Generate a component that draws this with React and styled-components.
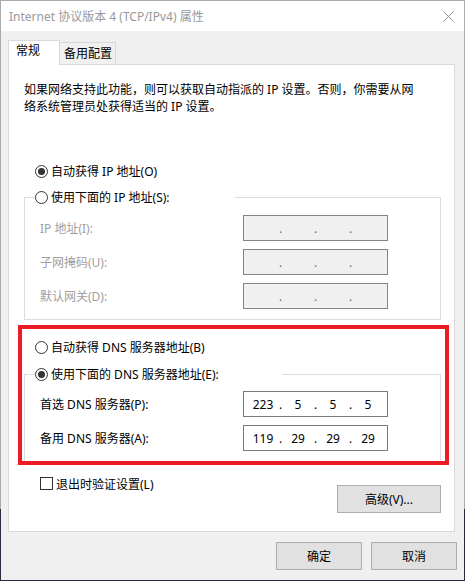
import React from 'react';
import styled, { createGlobalStyle } from 'styled-components';

const Global = createGlobalStyle`
  html, body { margin: 0; padding: 0; background: #fff; }
  body {
    font-family: "Noto Sans", "Noto Sans CJK SC", sans-serif;
    font-size: 12px;
    color: #000;
  }
  * { box-sizing: border-box; }
`;

const Window = styled.div`
  width: 465px;
  height: 581px;
  border: 1px solid #ababab;
  border-image: linear-gradient(to bottom, #ababab 0, #ababab 509px, #2b2a3d 509px, #2b2a3d 100%) 1;
  background: #f0f0f0;
  display: flex;
  flex-direction: column;
`;

const TitleBar = styled.div`
  height: 30px;
  background: #fff;
  display: flex;
  align-items: center;
  justify-content: space-between;
  padding: 0 10px 0 8px;
  color: #999;
  font-size: 12px;
  white-space: nowrap;
`;

const Body = styled.div`
  flex: 1;
  display: flex;
  flex-direction: column;
  padding: 9px 9px 0 7px;
`;

const TabRow = styled.div`
  display: flex;
  align-items: flex-end;
  height: 24px;
`;

const Tab = styled.div`
  position: relative;
  z-index: ${p => (p.$active ? 1 : 0)};
  background: ${p => (p.$active ? '#fff' : '#f0f0f0')};
  border: 1px solid #d9d9d9;
  border-bottom: none;
  border-left: ${p => (p.$active ? '1px solid #d9d9d9' : 'none')};
  width: ${p => (p.$active ? '52px' : '56px')};
  height: ${p => (p.$active ? '25px' : '22px')};
  margin-bottom: ${p => (p.$active ? '-1px' : '0')};
  padding: ${p => (p.$active ? '2px 0 0 7px' : '3px 0 0 4px')};
  line-height: 16px;
  white-space: nowrap;
`;

const Panel = styled.div`
  position: relative;
  height: 468px;
  background: #fff;
  border: 1px solid #d9d9d9;
  display: flex;
  flex-direction: column;
`;

const Desc = styled.p`
  margin: 16px 0 0 15px;
  line-height: 17px;
  white-space: nowrap;
`;

const RadioRow = styled.label`
  display: flex;
  align-items: center;
  height: 13px;
  line-height: 13px;
  margin: ${p => p.$m || '0'};
  padding-left: ${p => p.$pl || '0'};
  white-space: nowrap;
  gap: 3px;
`;

const Radio = styled.span`
  flex: none;
  width: 13px;
  height: 13px;
  border: 1px solid #333;
  border-radius: 50%;
  background: #fff;
  display: inline-flex;
  align-items: center;
  justify-content: center;
  &::after {
    content: '';
    width: 7px;
    height: 7px;
    border-radius: 50%;
    background: #333;
    display: ${p => (p.$checked ? 'block' : 'none')};
  }
`;

const Group = styled.fieldset`
  margin: ${p => p.$mt} 13px 0 15px;
  padding: ${p => p.$pt} 0 10px 15px;
  border: 1px solid #dcdcdc;
  min-width: 0;
`;

const Legend = styled.legend`
  padding: 0;
  margin-left: -5px;
  width: ${p => p.$w};
  height: 13px;
`;

const Rows = styled.div`
  display: grid;
  grid-template-columns: 203px 145px;
  row-gap: 8px;
`;

const FieldLabel = styled.div`
  height: 26px;
  display: flex;
  align-items: center;
  color: ${p => (p.$disabled ? '#a0a0a0' : '#000')};
  white-space: nowrap;
`;

const IpBox = styled.div`
  height: 26px;
  border: 1px solid ${p => (p.$disabled ? '#838383' : '#7a7a7a')};
  background: ${p => (p.$disabled ? '#f0f0f0' : '#fff')};
  display: flex;
  align-items: center;
  padding-left: 4px;
  color: ${p => (p.$disabled ? '#6d6d6d' : '#000')};
`;

const Octet = styled.span`
  width: 30px;
  text-align: center;
`;

const Dot = styled.span`
  width: 5px;
  text-align: center;
`;

const Footer = styled.div`
  display: flex;
  justify-content: space-between;
  align-items: flex-start;
  margin-top: 15px;
  padding: 0 13px 0 31px;
`;

const CheckRow = styled.label`
  display: flex;
  align-items: center;
  gap: 3px;
  height: 13px;
  white-space: nowrap;
`;

const CheckBox = styled.span`
  flex: none;
  width: 13px;
  height: 13px;
  border: 1px solid #333;
  background: #fff;
`;

const Button = styled.button`
  width: ${p => p.$w || '86px'};
  height: 28px;
  margin-top: ${p => p.$mt || '0'};
  background: #e1e1e1;
  border: 1px solid #adadad;
  font: inherit;
  color: #000;
  padding: 0;
`;

const ButtonBar = styled.div`
  display: flex;
  justify-content: flex-end;
  gap: 9px;
  margin: 10px -2px 0 0;
`;

const Highlight = styled.div`
  position: absolute;
  left: 9px;
  top: 260px;
  width: 431px;
  height: 140px;
  border: 4px solid #ed1c24;
  pointer-events: none;
`;

const CloseIcon = () => (
  <svg width="11" height="11" viewBox="0 0 11 11">
    <path d="M0.5 0.5 L10.5 10.5 M10.5 0.5 L0.5 10.5" stroke="#8f8f8f" strokeWidth="1" fill="none" />
  </svg>
);

const IpField = ({ values, disabled }) => (
  <IpBox $disabled={disabled}>
    {[0, 1, 2, 3].map(i => (
      <React.Fragment key={i}>
        <Octet>{values ? values[i] : ''}</Octet>
        {i < 3 && <Dot>.</Dot>}
      </React.Fragment>
    ))}
  </IpBox>
);

export default function App() {
  return (
    <>
      <Global />
      <Window>
        <TitleBar>
          <span>Internet 协议版本 4 (TCP/IPv4) 属性</span>
          <CloseIcon />
        </TitleBar>
        <Body>
          <TabRow>
            <Tab $active>常规</Tab>
            <Tab>备用配置</Tab>
          </TabRow>
          <Panel>
            <Desc>
              如果网络支持此功能，则可以获取自动指派的 IP 设置。否则，你需要从网
              <br />
              络系统管理员处获得适当的 IP 设置。
            </Desc>

            <RadioRow $m="50px 0 0 0" $pl="26px">
              <Radio $checked />
              自动获得 IP 地址(O)
            </RadioRow>

            <Group $mt="13px" $pt="11px">
              <Legend $w="200px">
                <RadioRow>
                  <Radio />
                  使用下面的 IP 地址(S):
                </RadioRow>
              </Legend>
              <Rows>
                <FieldLabel $disabled>IP 地址(I):</FieldLabel>
                <IpField disabled />
                <FieldLabel $disabled>子网掩码(U):</FieldLabel>
                <IpField disabled />
                <FieldLabel $disabled>默认网关(D):</FieldLabel>
                <IpField disabled />
              </Rows>
            </Group>

            <RadioRow $m="21px 0 0 0" $pl="26px">
              <Radio />
              自动获得 DNS 服务器地址(B)
            </RadioRow>

            <Group $mt="14px" $pt="10px">
              <Legend $w="247px">
                <RadioRow>
                  <Radio $checked />
                  使用下面的 DNS 服务器地址(E):
                </RadioRow>
              </Legend>
              <Rows>
                <FieldLabel>首选 DNS 服务器(P):</FieldLabel>
                <IpField values={['223', '5', '5', '5']} />
                <FieldLabel>备用 DNS 服务器(A):</FieldLabel>
                <IpField values={['119', '29', '29', '29']} />
              </Rows>
            </Group>

            <Footer>
              <CheckRow>
                <CheckBox />
                退出时验证设置(L)
              </CheckRow>
              <Button $w="104px" $mt="8px">高级(V)...</Button>
            </Footer>

            <Highlight />
          </Panel>
          <ButtonBar>
            <Button>确定</Button>
            <Button>取消</Button>
          </ButtonBar>
        </Body>
      </Window>
    </>
  );
}
